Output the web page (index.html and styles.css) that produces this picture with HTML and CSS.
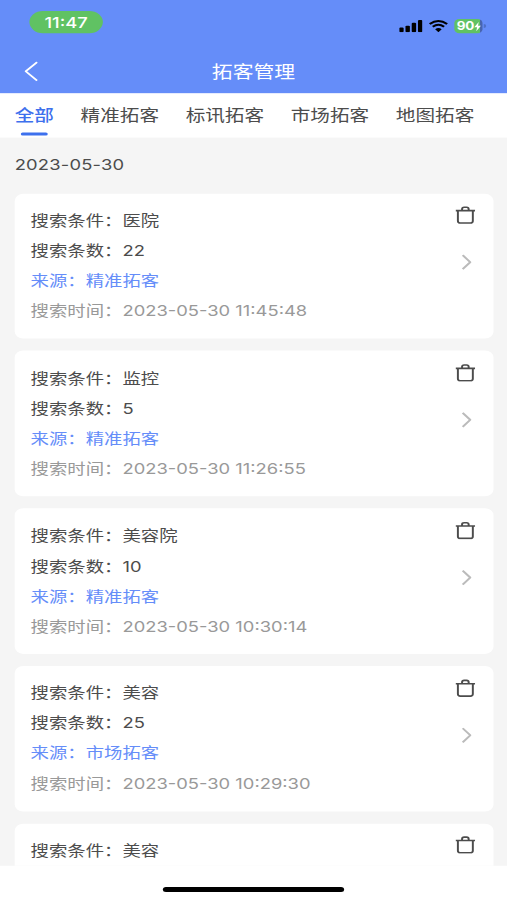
FILE: index.html
```html
<!DOCTYPE html>
<html lang="zh-CN">
<head>
<meta charset="utf-8">
<title>拓客管理</title>
<link rel="stylesheet" href="styles.css">
</head>
<body>
<svg class="defs" width="0" height="0">
  <symbol id="trash" viewBox="0 0 16 18" preserveAspectRatio="none"><path d="M0 4.7H16M1.9 5V15Q1.9 17 3.9 17H12.1Q14.1 17 14.1 15V5M5.3 4.5V3.2Q5.3 1.4 7 1.4H9Q10.7 1.4 10.7 3.2V4.5" fill="none" stroke="currentColor" stroke-width="1.6"/></symbol>
  <symbol id="arrow" viewBox="0 0 8 16"><path d="M.8 1 7 8 .8 15" fill="none" stroke="currentColor" stroke-width="1.8"/></symbol>
</svg>
<div class="screen">
  <header class="header">
    <div class="status">
      <span class="clock">11:47</span>
      <div class="indicators">
        <svg class="signal" viewBox="0 0 19 13" preserveAspectRatio="none"><rect y="8" width="3.6" height="5" rx="1"/><rect x="5.1" y="6" width="3.6" height="7" rx="1"/><rect x="10.2" y="3" width="3.6" height="10" rx="1"/><rect x="15.3" width="3.6" height="13" rx="1"/></svg>
        <svg class="wifi" viewBox="0 0 18 13" preserveAspectRatio="none"><path d="M1 4.3Q9-2.2 17 4.3M3.8 7.2Q9 3 14.2 7.2" fill="none" stroke="#000" stroke-width="2.2"/><path d="M6 9.8Q9 7.3 12 9.8L9 13Z"/></svg>
        <div class="battery"><span class="level">90</span><svg class="bolt" viewBox="0 0 6 10"><path d="M4 0 0 5.7H2.5L1.8 10 6 4.1H3.4Z" fill="#fff"/></svg></div>
        <i class="cap"></i>
      </div>
    </div>
    <div class="navbar">
      <svg class="back" viewBox="0 0 11 20" preserveAspectRatio="none"><path d="M10.3.8 1 10l9.3 9.2" fill="none" stroke="#fff" stroke-width="1.6"/></svg>
      <h1 class="title">拓客管理</h1>
    </div>
  </header>
  <nav class="tabs">
    <span class="tab active">全部</span><span class="tab">精准拓客</span><span class="tab">标讯拓客</span><span class="tab">市场拓客</span><span class="tab">地图拓客</span>
  </nav>
  <main class="list">
    <h2 class="date">2023-05-30</h2>
    <article class="card">
      <div class="info"><p>搜索条件：<b>医院</b></p><p>搜索条数：<b>22</b></p><p class="source">来源：<b>精准拓客</b></p><p class="time">搜索时间：<b>2023-05-30 11:45:48</b></p></div>
      <div class="actions"><svg class="trash"><use href="#trash"/></svg><svg class="arrow"><use href="#arrow"/></svg></div>
    </article>
    <article class="card">
      <div class="info"><p>搜索条件：<b>监控</b></p><p>搜索条数：<b>5</b></p><p class="source">来源：<b>精准拓客</b></p><p class="time">搜索时间：<b>2023-05-30 11:26:55</b></p></div>
      <div class="actions"><svg class="trash"><use href="#trash"/></svg><svg class="arrow"><use href="#arrow"/></svg></div>
    </article>
    <article class="card">
      <div class="info"><p>搜索条件：<b>美容院</b></p><p>搜索条数：<b>10</b></p><p class="source">来源：<b>精准拓客</b></p><p class="time">搜索时间：<b>2023-05-30 10:30:14</b></p></div>
      <div class="actions"><svg class="trash"><use href="#trash"/></svg><svg class="arrow"><use href="#arrow"/></svg></div>
    </article>
    <article class="card">
      <div class="info"><p>搜索条件：<b>美容</b></p><p>搜索条数：<b>25</b></p><p class="source">来源：<b>市场拓客</b></p><p class="time">搜索时间：<b>2023-05-30 10:29:30</b></p></div>
      <div class="actions"><svg class="trash"><use href="#trash"/></svg><svg class="arrow"><use href="#arrow"/></svg></div>
    </article>
    <article class="card last">
      <div class="info"><p>搜索条件：<b>美容</b></p></div>
      <div class="actions"><svg class="trash"><use href="#trash"/></svg></div>
    </article>
  </main>
  <footer class="home"><div class="home-bar"></div></footer>
</div>
</body>
</html>
```
FILE: styles.css
```css
* { box-sizing: border-box; margin: 0; padding: 0; }
html, body { width: 507px; height: 900px; overflow: hidden; background: #fff; }
body { font-family: Inter, "Noto Sans CJK SC", sans-serif; color: #4c4c4c; }
svg { display: block; }
.defs { position: absolute; }
/* 414 x 896 layout stretched to the viewport */
.screen { width: 414px; height: 896px; display: flex; flex-direction: column; transform: scale(1.22464, 1.00446); transform-origin: 0 0; }
.header { height: 93px; flex: none; background: #658df9; }
.status { height: 49px; display: flex; justify-content: space-between; padding: 11px 17px 0 24px; }
.clock { width: 60px; height: 22px; border-radius: 11px; background: #60c263; color: #fff; font-size: 15px; font-weight: 500; line-height: 23px; text-align: center; }
.indicators { display: flex; height: 14px; margin-top: 8px; align-items: center; }
.signal { width: 19px; height: 12px; }
.wifi { width: 16px; height: 12px; margin-left: 5px; }
.battery { display: flex; align-items: center; width: 23px; height: 14px; margin-left: 5px; border-radius: 4px; background: linear-gradient(90deg, #60c263 90%, #4865b0 90%); color: #fff; }
.level { font-size: 11px; font-weight: 700; line-height: 14px; padding-left: 2px; letter-spacing: -.3px; }
.bolt { width: 6px; height: 9px; flex: none; }
.cap { width: 2px; height: 4px; margin: 0 0 0 1px; border-radius: 0 2px 2px 0; background: #4e70c8; }
.navbar { height: 44px; display: grid; grid-template-columns: 60px 1fr 60px; align-items: center; }
.back { width: 11px; height: 20px; margin-left: 20px; }
.title { color: #fff; font-size: 17px; font-weight: 400; line-height: 24px; padding: 2px 0 0; text-align: center; }
.tabs { height: 44px; flex: none; display: flex; gap: 21.8px; padding-left: 12px; background: #fff; font-size: 16px; line-height: 43px; white-space: nowrap; }
.tab { height: 44px; }
.active { display: flex; flex-direction: column; align-items: center; color: #3d70ed; font-weight: 500; }
.active::after { content: ""; width: 22px; height: 3px; margin-top: -4.3px; border-radius: 2px; background: #3d70ed; }
.list { height: 725px; flex: none; overflow: hidden; background: #f5f5f5; padding: 0 11px 0 12px; }
.date { height: 55.6px; font-size: 15px; font-weight: 400; line-height: 53px; letter-spacing: .15px; }
.card { height: 144.8px; margin-bottom: 12px; border-radius: 7px; background: #fff; display: flex; justify-content: space-between; padding: 12px 14px 0 13px; }
.info { padding-top: .4px; font-size: 15px; line-height: 30px; white-space: nowrap; }
.info b { font-weight: 400; }
.source { color: #658df9; }
.time { color: #999; }
.actions { display: flex; flex-direction: column; align-items: center; width: 18px; }
.trash { width: 16px; height: 18px; margin-top: .6px; }
.arrow { width: 8px; height: 16px; margin-top: 30.2px; margin-left: 2px; color: #bbb; }
.home { height: 34px; flex: none; padding-top: 21px; background: #fff; }
.home-bar { width: 148px; height: 5px; margin: 0 auto; border-radius: 3px; background: #000; }
```
